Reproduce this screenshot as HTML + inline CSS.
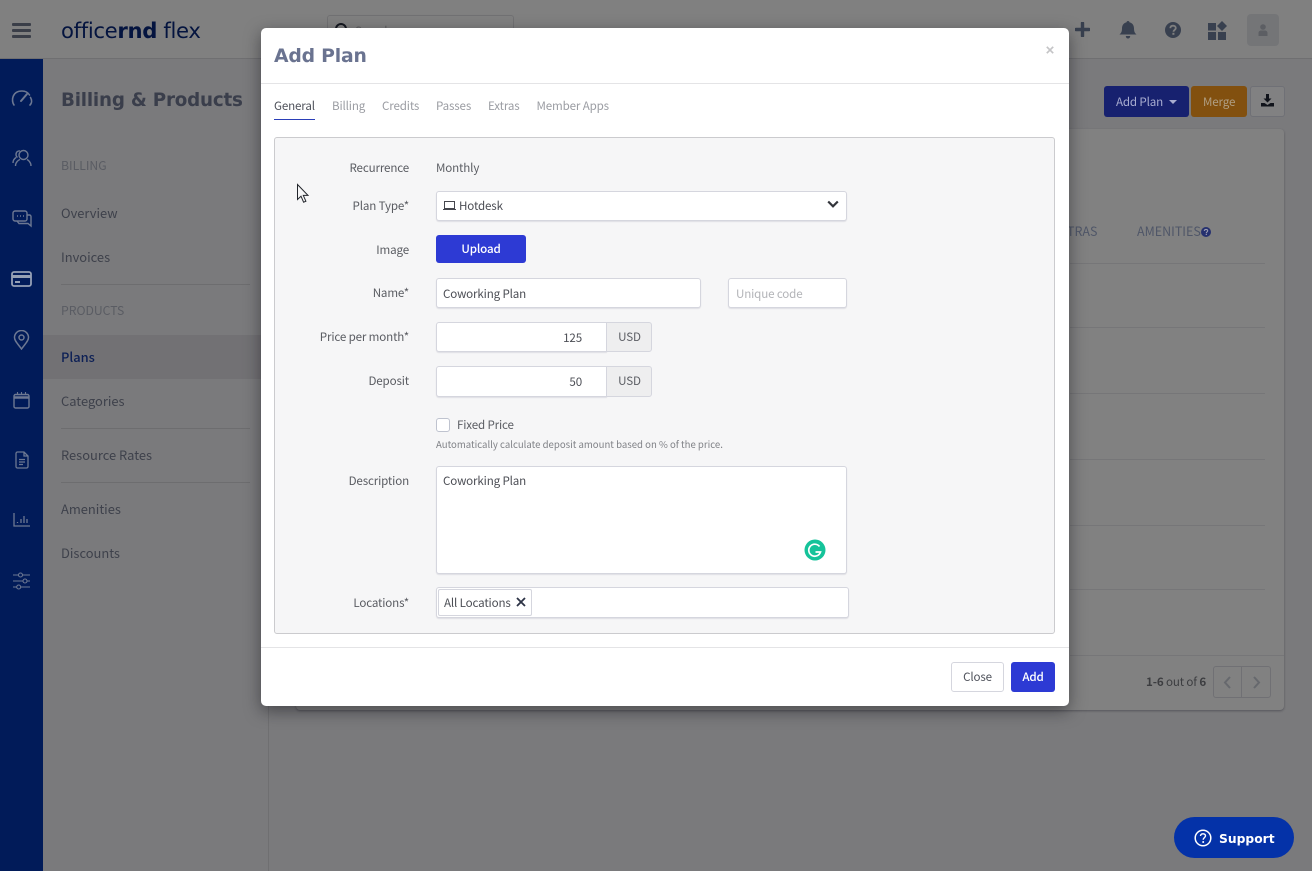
<!DOCTYPE html>
<html><head><meta charset="utf-8"><title>Add Plan</title>
<style>
html,body{margin:0;padding:0;width:1312px;height:871px;overflow:hidden;background:#7a7a7c}
*{box-sizing:border-box}
body{font-family:"Noto Sans CJK JP","Liberation Sans",sans-serif;font-size:11.6px;letter-spacing:-.15px;color:#4a4d55;position:relative}
.a{position:absolute}
.t{position:absolute;white-space:nowrap;line-height:18px;height:18px}
.nav{font-size:12.9px;letter-spacing:0;color:#3e414b}
.lbl{left:280px;width:129px;text-align:right;color:#5a5c62}
.in{position:absolute;background:#fff;border:1px solid #d5d6de;border-radius:3px;box-shadow:0 1px 1px rgba(60,60,90,.12)}
.tab{top:97px;color:#9b9da3}
.hr{position:absolute;height:1px;background:#6d6d6f}
svg{position:absolute;display:block}
</style></head><body>

<!-- header -->
<div class="a" style="left:0;top:0;width:1312px;height:59px;background:#808080;border-bottom:1px solid #6f6f71"></div>
<div class="a" style="left:12px;top:23px;width:19px;height:3px;background:#3a3e48;border-radius:1px"></div>
<div class="a" style="left:12px;top:29px;width:19px;height:3px;background:#3a3e48;border-radius:1px"></div>
<div class="a" style="left:12px;top:35px;width:19px;height:3px;background:#3a3e48;border-radius:1px"></div>
<div class="t" style="left:61px;top:16px;height:30px;line-height:30px;font-family:'DejaVu Sans',sans-serif;font-size:21.2px;color:#04143f;letter-spacing:-.35px;font-weight:400">office<b>rnd</b> flex</div>
<div class="a" style="left:327px;top:15px;width:187px;height:20px;border:1px solid #717173;border-radius:3px"></div>
<svg style="left:334px;top:23px" width="16" height="8"><circle cx="7" cy="6" r="5" fill="none" stroke="#14171f" stroke-width="2"/></svg>
<div class="t" style="left:355px;top:22px;color:#5c5c5e">Search</div>

<svg style="left:1075px;top:22px" width="15" height="15" viewBox="0 0 15 15"><path d="M7.5 1v13M1 7.5h13" stroke="#38404f" stroke-width="3.4" stroke-linecap="round"/></svg>
<svg style="left:1119px;top:20px" width="18" height="20" viewBox="0 0 18 20"><path d="M9 1c1 0 1.400.6 1.400 1.300C13.500 3 15 5.500 15 8.500c0 3 .8 4.500 2.500 6H.5C2.200 13 3 11.500 3 8.500 3 5.500 4.500 3 7.600 2.300 7.600 1.600 8 1 9 1zM6.800 16h4.400c0 1.500-1 2.500-2.200 2.500S6.800 17.500 6.800 16z" fill="#38404f"/></svg>
<svg style="left:1165px;top:22px" width="16" height="16" viewBox="0 0 16 16"><circle cx="8" cy="8" r="8" fill="#38404f"/><path d="M5.300 6.200C5.400 4.600 6.500 3.700 8 3.700c1.600 0 2.800 1 2.800 2.300 0 1.800-2.300 2-2.300 3.700" fill="none" stroke="#7f7f7f" stroke-width="1.800"/><rect x="7.400" y="10.800" width="2" height="2" fill="#7f7f7f"/></svg>
<svg style="left:1208px;top:21px" width="19" height="19" viewBox="0 0 19 19" fill="#38404f"><rect x="0" y="2" width="8" height="7.500"/><rect x="0" y="11" width="8" height="8"/><rect x="10" y="11" width="8" height="8"/><path d="M14 0l5 5-5 5-5-5z"/></svg>
<div class="a" style="left:1247px;top:14px;width:32px;height:32px;background:#747577;border-radius:4px"></div>
<svg style="left:1257px;top:24px" width="12" height="12" viewBox="0 0 12 12" fill="#5c5e63"><circle cx="6" cy="3" r="2.800"/><path d="M1.500 12V9c0-1.800 1.500-2.500 2.500-2.500h4c1 0 2.500.7 2.500 2.500v3z"/></svg>

<!-- sidebar -->
<div class="a" style="left:0;top:59px;width:43px;height:812px;background:#011b59"></div>
<svg style="left:10px;top:88px" width="24" height="20" viewBox="0 0 24 20" fill="none" stroke="#6d7892" stroke-width="1.600" stroke-linecap="round"><path d="M4 17C1 13 2 3 12 3c4 0 6 1.500 7.500 4M20.500 9.500C22 12 22 15 20 17"/><path d="M11 13L17 6" stroke-width="2"/></svg>
<svg style="left:12px;top:149px" width="20" height="19" viewBox="0 0 20 19" fill="none" stroke="#6d7892" stroke-width="1.400"><circle cx="11.500" cy="6" r="4.500"/><path d="M3.500 17c0-4 3-6 4.500-6.500M19 17c0-4-3-6-4-6.500M1 14c0-3 1.500-4.500 3-5.500M8 2C6 1.500 4 3 4 5.500c0 1.500.7 2.500 1.500 3"/></svg>
<svg style="left:12px;top:210px" width="20" height="18" viewBox="0 0 20 18" fill="none" stroke="#6d7892" stroke-width="1.400"><rect x="1" y="1" width="14" height="10" rx="2"/><path d="M15 5h2.500A1.500 1.500 0 0 1 19 6.500V16l-3-2.500H7L5 11"/><path d="M5 6h1M8 6h1M11 6h1"/></svg>
<svg style="left:11px;top:271px" width="21" height="16" viewBox="0 0 21 16"><rect x="1" y="1" width="19" height="14" rx="2" fill="none" stroke="#95a0b5" stroke-width="1.800"/><rect x="1" y="4" width="19" height="3" fill="#95a0b5"/><rect x="4" y="10" width="5" height="2" fill="#95a0b5"/></svg>
<svg style="left:13px;top:330px" width="17" height="20" viewBox="0 0 17 20" fill="none" stroke="#6d7892" stroke-width="1.500"><path d="M8.500 19C5 14 1.500 11 1.500 7.500a7 7 0 0 1 14 0C15.500 11 12 14 8.500 19z"/><circle cx="8.500" cy="7.500" r="2.500"/></svg>
<svg style="left:13px;top:392px" width="17" height="17" viewBox="0 0 17 17" fill="none" stroke="#6d7892" stroke-width="1.400"><path d="M2.500 2.500h12a1.500 1.500 0 0 1 1.500 1.500v10.500a1.500 1.500 0 0 1-1.500 1.500h-12A1.500 1.500 0 0 1 1 14.500V4a1.500 1.500 0 0 1 1.500-1.500z"/><path d="M1 5.500h15" stroke-width="2.500"/><path d="M4.500 0v3M8.500 0v3M12.500 0v3" stroke-width="1.100"/></svg>
<svg style="left:15px;top:451px" width="14" height="18" viewBox="0 0 14 18" fill="none" stroke="#6d7892" stroke-width="1.300"><path d="M2.500 1H9l4 4v10.500a1.500 1.500 0 0 1-1.500 1.500h-9A1.500 1.500 0 0 1 1 15.500v-13A1.500 1.500 0 0 1 2.500 1zM9 1v4h4M4 8.500h6M4 11h6M4 13.500h4"/></svg>
<svg style="left:13px;top:513px" width="17" height="14" viewBox="0 0 17 14" fill="none" stroke="#6d7892" stroke-width="1.300"><path d="M1 0v13h16M4.500 10v-1M8 10V6M11 10V3M14 10V6"/></svg>
<svg style="left:13px;top:572px" width="17" height="18" viewBox="0 0 17 18" fill="none" stroke="#6d7892" stroke-width="1.100"><path d="M0 3h5.500M9.500 3H17M0 9h10M14 9h3M0 15h3.500M8 15h9"/><circle cx="7.500" cy="3" r="2"/><circle cx="12" cy="9" r="2"/><circle cx="5.700" cy="15" r="2"/></svg>

<!-- left panel -->
<div class="a" style="left:268px;top:59px;width:1px;height:812px;background:#6f6f71"></div>
<div class="t" style="left:61px;top:88px;height:26px;line-height:26px;font-family:'DejaVu Sans',sans-serif;font-size:18.3px;font-weight:bold;color:#3a3e4b;letter-spacing:-.2px">Billing &amp; Products</div>
<div class="t" style="left:61px;top:156px;color:#5a5c63;font-size:12.2px;letter-spacing:0">BILLING</div>
<div class="t nav" style="left:61px;top:204px">Overview</div>
<div class="t nav" style="left:61px;top:248px">Invoices</div>
<div class="hr" style="left:61px;top:284px;width:189px"></div>
<div class="t" style="left:61px;top:301px;color:#5a5c63;font-size:12.2px;letter-spacing:0">PRODUCTS</div>
<div class="a" style="left:43px;top:335px;width:218px;height:44px;background:#727174"></div>
<div class="t nav" style="left:61px;top:348px;color:#0c1f55;font-weight:500">Plans</div>
<div class="t nav" style="left:61px;top:392px">Categories</div>
<div class="hr" style="left:61px;top:428px;width:189px"></div>
<div class="t nav" style="left:61px;top:446px">Resource Rates</div>
<div class="hr" style="left:61px;top:482px;width:189px"></div>
<div class="t nav" style="left:61px;top:500px">Amenities</div>
<div class="t nav" style="left:61px;top:544px">Discounts</div>

<!-- right content -->
<div class="a" style="left:1104px;top:86px;width:85px;height:31px;background:#17216f;border-radius:3px"></div>
<div class="t" style="left:1116px;top:93px;color:#a9add0">Add Plan</div>
<div class="a" style="left:1169px;top:100px;border:4px solid transparent;border-top-color:#a9add0;border-bottom:0"></div>
<div class="a" style="left:1191px;top:86px;width:56px;height:31px;background:#82500f;border-radius:3px"></div>
<div class="t" style="left:1203px;top:93px;color:#b09f84">Merge</div>
<div class="a" style="left:1250px;top:86px;width:35px;height:31px;border:1px solid #6f7076;border-radius:3px;background:#818182"></div>
<svg style="left:1261px;top:94px" width="13" height="13" viewBox="0 0 13 13" fill="#10131b"><path d="M5 0h3v4.500h2.500L6.500 8.500l-4-4H5zM0 9h3.500l3 2 3-2H13v3.500H0z"/></svg>
<div class="a" style="left:296px;top:129px;width:988px;height:581px;background:#818181;border-radius:4px;box-shadow:0 1px 2px rgba(40,40,50,.45)"></div>
<div class="t" style="left:1067px;top:222px;color:#4f5668;font-size:12.5px;letter-spacing:0">TRAS</div>
<div class="t" style="left:1137px;top:222px;color:#4f5668;font-size:12.5px;letter-spacing:0">AMENITIES</div>
<svg style="left:1201px;top:227px" width="10" height="10" viewBox="0 0 10 10"><circle cx="5" cy="5" r="5" fill="#25306f"/><path d="M3.300 3.900C3.400 2.900 4 2.400 5 2.400c1 0 1.700.6 1.700 1.400 0 1.100-1.400 1.200-1.400 2.300" fill="none" stroke="#9a9bb0" stroke-width="1.100"/><rect x="4.700" y="6.800" width="1.200" height="1.200" fill="#9a9bb0"/></svg>
<div class="hr" style="left:1070px;top:263px;width:195px;background:#767678"></div>
<div class="hr" style="left:1070px;top:327px;width:195px;background:#767678"></div>
<div class="hr" style="left:1070px;top:393px;width:195px;background:#767678"></div>
<div class="hr" style="left:1070px;top:459px;width:195px;background:#767678"></div>
<div class="hr" style="left:1070px;top:525px;width:195px;background:#767678"></div>
<div class="hr" style="left:1070px;top:589px;width:195px;background:#767678"></div>
<div class="hr" style="left:1070px;top:655px;width:214px;background:#767678"></div>
<div class="t" style="left:1146px;top:673px;color:#3c3d40"><b>1-6</b> out of <b>6</b></div>
<div class="a" style="left:1213px;top:666px;width:58px;height:32px;border:1px solid #707074;border-radius:3px"></div>
<div class="a" style="left:1241px;top:666px;width:1px;height:32px;background:#707074"></div>
<svg style="left:1223px;top:676px" width="9" height="13" viewBox="0 0 9 13" fill="none" stroke="#66686d" stroke-width="2"><path d="M7 1L2 6.500 7 12"/></svg>
<svg style="left:1252px;top:676px" width="9" height="13" viewBox="0 0 9 13" fill="none" stroke="#66686d" stroke-width="2"><path d="M2 1l5 5.500L2 12"/></svg>

<!-- support -->
<div class="a" style="left:1174px;top:817px;width:120px;height:41px;background:#0432a8;border-radius:21px"></div>
<svg style="left:1194px;top:829px" width="18" height="18" viewBox="0 0 18 18" fill="none" stroke="#fff"><circle cx="9" cy="9" r="7.800" stroke-width="1.500"/><path d="M6.500 7C6.600 5.500 7.600 4.800 9 4.800c1.400 0 2.500.8 2.500 2 0 1.700-2.300 2-2.300 3.900" stroke-width="1.400"/><circle cx="9.200" cy="13" r="1" fill="#fff" stroke="none"/></svg>
<div class="t" style="left:1219px;top:830px;color:#fff;font-weight:bold;font-size:12.3px;letter-spacing:0;font-family:'DejaVu Sans','Liberation Sans',sans-serif">Support</div>

<!-- modal -->
<div class="a" style="left:261px;top:28px;width:808px;height:678px;background:#fff;border-radius:5px;box-shadow:0 5px 16px rgba(20,20,25,.5)"></div>
<div class="t" style="left:274px;top:43px;height:28px;line-height:28px;font-family:'DejaVu Sans',sans-serif;font-size:18.8px;font-weight:bold;color:#6a7390;letter-spacing:-.2px">Add Plan</div>
<svg style="left:1046px;top:46px" width="8" height="8" viewBox="0 0 8 8"><path d="M.8.800l6.400 6.400M7.200.800L.8 7.200" stroke="#c4c4c6" stroke-width="1.700"/></svg>
<div class="a" style="left:261px;top:83px;width:808px;height:1px;background:#e4e4e6"></div>
<div class="t tab" style="left:274px;color:#50535c">General</div>
<div class="a" style="left:274px;top:119px;width:41px;height:1px;background:#2b3fb8"></div>
<div class="t tab" style="left:332px">Billing</div>
<div class="t tab" style="left:382px">Credits</div>
<div class="t tab" style="left:436px">Passes</div>
<div class="t tab" style="left:488px">Extras</div>
<div class="t tab" style="left:536.5px">Member Apps</div>

<div class="a" style="left:274px;top:137px;width:781px;height:497px;background:#f6f6f7;border:1px solid #cbcbce;border-radius:3px"></div>

<div class="t lbl" style="top:159px">Recurrence</div>
<div class="t" style="left:436px;top:159px;color:#5c5e64">Monthly</div>

<div class="t lbl" style="top:197px">Plan Type*</div>
<div class="in" style="left:436px;top:191px;width:411px;height:30px"></div>
<svg style="left:443px;top:200px" width="14" height="11" viewBox="0 0 14 11" fill="none" stroke="#45474e"><rect x="1.500" y="1.500" width="10" height="7"/><path d="M0 9.500h13"/></svg>
<div class="t" style="left:459px;top:197px;color:#4c4e55">Hotdesk</div>
<svg style="left:827px;top:200px" width="12" height="9" viewBox="0 0 12 9" fill="none" stroke="#33353b" stroke-width="2.200"><path d="M1.200 1.500L6 6.300l4.800-4.800"/></svg>

<div class="t lbl" style="top:241px">Image</div>
<div class="a" style="left:436px;top:235px;width:90px;height:28px;background:#2d3ad4;border-radius:3px"></div>
<div class="t" style="left:436px;top:240px;width:90px;text-align:center;color:#fff;font-weight:500">Upload</div>

<div class="t lbl" style="top:284px">Name*</div>
<div class="in" style="left:436px;top:278px;width:265px;height:30px"></div>
<div class="t" style="left:443px;top:285px;color:#4c4e55">Coworking Plan</div>
<div class="in" style="left:728px;top:278px;width:119px;height:30px"></div>
<div class="t" style="left:736px;top:285px;color:#b3b4b8">Unique code</div>

<div class="t lbl" style="top:328px">Price per month*</div>
<div class="in" style="left:436px;top:322px;width:171px;height:30px;border-radius:3px 0 0 3px"></div>
<div class="t" style="left:436px;top:329px;width:146px;text-align:right;color:#4c4e55">125</div>
<div class="a" style="left:606px;top:322px;width:46px;height:30px;background:#eeeeef;border:1px solid #d5d6de;border-radius:0 3px 3px 0"></div>
<div class="t" style="left:606px;top:328px;width:47px;text-align:center;color:#5c5e64">USD</div>

<div class="t lbl" style="top:372px">Deposit</div>
<div class="in" style="left:436px;top:366px;width:171px;height:31px;border-radius:3px 0 0 3px"></div>
<div class="t" style="left:436px;top:373px;width:146px;text-align:right;color:#4c4e55">50</div>
<div class="a" style="left:606px;top:366px;width:46px;height:31px;background:#eeeeef;border:1px solid #d5d6de;border-radius:0 3px 3px 0"></div>
<div class="t" style="left:606px;top:372px;width:47px;text-align:center;color:#5c5e64">USD</div>

<div class="a" style="left:436px;top:418px;width:14px;height:14px;background:#fff;border:1px solid #bfc3cf;border-radius:3px"></div>
<div class="t" style="left:457px;top:416px;color:#5c5e64">Fixed Price</div>
<div class="t" style="left:436px;top:435px;color:#808287;font-size:9.6px;letter-spacing:0">Automatically calculate deposit amount based on % of the price.</div>

<div class="t lbl" style="top:472px">Description</div>
<div class="in" style="left:436px;top:466px;width:411px;height:108px"></div>
<div class="t" style="left:443px;top:472px;color:#4c4e55">Coworking Plan</div>
<svg style="left:804px;top:539px" width="22" height="22" viewBox="0 0 22 22"><circle cx="11" cy="11" r="10.500" fill="#15c39a"/><path d="M15.500 7.500A6 6 0 1 0 16.500 13h-5" fill="none" stroke="#fff" stroke-width="1.700"/></svg>

<div class="t lbl" style="top:594px">Locations*</div>
<div class="in" style="left:436px;top:587px;width:413px;height:31px"></div>
<div class="a" style="left:438px;top:589px;width:94px;height:27px;border:1px solid #d5d6de;border-radius:2px;background:#fff"></div>
<div class="t" style="left:444px;top:594px;color:#4c4e55">All Locations</div>
<svg style="left:516px;top:597px" width="10" height="10" viewBox="0 0 10 10"><path d="M1 1l8 8M9 1l-8 8" stroke="#2c3345" stroke-width="1.800"/></svg>

<div class="a" style="left:261px;top:647px;width:808px;height:1px;background:#e4e4e6"></div>
<div class="a" style="left:951px;top:662px;width:53px;height:30px;background:#fff;border:1px solid #d5d6de;border-radius:3px"></div>
<div class="t" style="left:951px;top:668px;width:53px;text-align:center;color:#50535c">Close</div>
<div class="a" style="left:1011px;top:662px;width:44px;height:30px;background:#2d3ad4;border-radius:3px"></div>
<div class="t" style="left:1011px;top:668px;width:44px;text-align:center;color:#fff;font-weight:500">Add</div>

<!-- cursor -->
<svg style="left:296px;top:183px" width="14" height="21" viewBox="0 0 14 21"><path d="M1.500 1.500v15l3.500-3.300 2.600 6 2.300-1-2.600-5.800h4.700z" fill="#f6f6f7" stroke="#22252b" stroke-width="1"/></svg>
</body></html>
